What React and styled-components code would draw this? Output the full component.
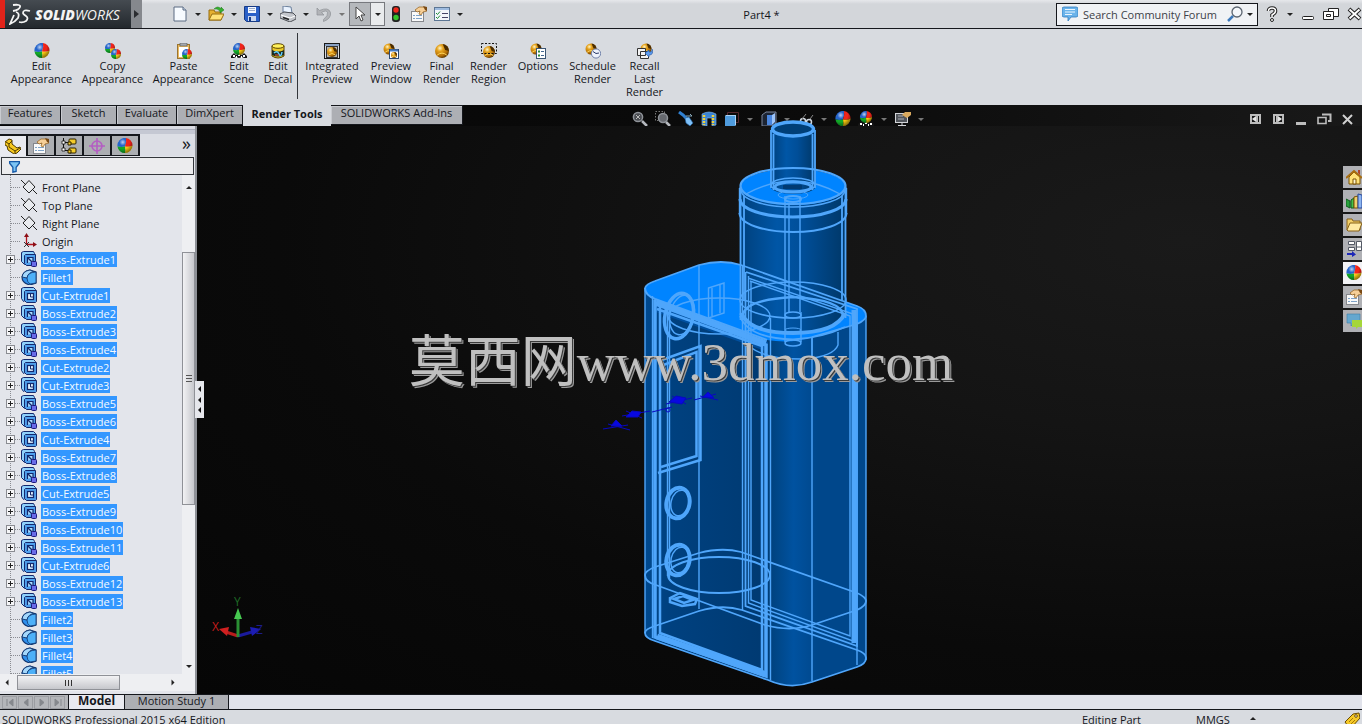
import { useId } from "react";
import styled, { createGlobalStyle, css } from "styled-components";

const GlobalStyle = createGlobalStyle`
  * { box-sizing: border-box; }
  body {
    margin: 0;
    overflow: hidden;
    font-family: "Open Sans", "Noto Sans", sans-serif;
    font-size: 11px;
    color: #15171c;
  }
  button, input { font: inherit; color: inherit; }
  button { border: 0; padding: 0; background: none; }
  svg { display: block; flex: none; }
`;

/* ---------- small icons, all on a 16px grid ---------- */

const Svg = ({ children, size = 16, ...rest }) => (
  <svg width={size} height={size} viewBox="0 0 16 16" fill="none" {...rest}>
    {children}
  </svg>
);

const Ball = ({ cx = 8, cy = 8, r = 8 }) => {
  const id = useId();
  return (
    <g>
      <radialGradient id={id} cx="35%" cy="28%" r="75%">
        <stop offset="0" stopColor="#fff" stopOpacity="0.7" />
        <stop offset="0.3" stopColor="#fff" stopOpacity="0" />
        <stop offset="0.6" stopColor="#000" stopOpacity="0" />
        <stop offset="1" stopColor="#000" stopOpacity="0.45" />
      </radialGradient>
      <g transform={`translate(${cx} ${cy}) scale(${r / 8})`}>
        <path d="M1-8A8 8 0 0 0-8 1Q-4 2 0 1Q2-4 1-8Z" fill="#2565cc" />
        <path d="M1-8Q2-4 0 1Q5 2 8 0A8 8 0 0 0 1-8Z" fill="#f0241a" />
        <path d="M-8 1Q-4 2 0 1Q1 5 0 8A8 8 0 0 1-8 1Z" fill="#12a828" />
        <path d="M0 1Q5 2 8 0A8 8 0 0 1 0 8Q1 5 0 1Z" fill="#f8c810" />
      </g>
      <circle cx={cx} cy={cy} r={r} fill={`url(#${id})`} />
    </g>
  );
};

const Gold = ({ cx = 8, cy = 8, r = 7 }) => {
  const id = useId();
  return (
    <g>
      <radialGradient id={id} cx="35%" cy="30%" r="75%">
        <stop offset="0" stopColor="#fff6c8" />
        <stop offset="0.3" stopColor="#e5a21c" />
        <stop offset="0.75" stopColor="#b06c06" />
        <stop offset="1" stopColor="#4a2c00" />
      </radialGradient>
      <circle cx={cx} cy={cy} r={r} fill={`url(#${id})`} />
      <path
        d={`M${cx + r * 0.1} ${cy - r}A${r} ${r} 0 0 1 ${cx + r} ${cy}L${cx + r * 0.45} ${cy - r * 0.15}Z`}
        fill="#4a2c00"
      />
      <path d={`M${cx - r * 0.7} ${cy + r * 0.6}Q${cx} ${cy} ${cx + r * 0.7} ${cy + r * 0.6}`} stroke="#ffd75a" />
    </g>
  );
};

const Checks = () => (
  <g>
    <path d="M0 13l3-3 2 2 3-2 3 2 2-2 3 3v2h-3l-2-1-3 1-3-1-2 1H0z" fill="#151515" />
    <path d="M2 13h2M7 12h2M12 13h2M5 14h1M10 14h1" stroke="#fff" strokeWidth="2" />
  </g>
);

const Page = ({ x, y, w, h }) => (
  <g>
    <rect x={x + 0.5} y={y + 0.5} width={w} height={h} fill="#fff" stroke="#3b5573" />
    <path d={`M${x + 2} ${y + 3.5}h2M${x + 2} ${y + 7.5}h2`} stroke="#2a8a3a" strokeWidth="2" />
    <path d={`M${x + 5} ${y + 3.5}h3M${x + 5} ${y + 7.5}h3`} stroke="#44688f" />
  </g>
);

const Hand = ({ dark }) => (
  <g>
    <rect x="0.5" y="5.5" width="12" height="10" fill={dark ? "#4a4a4a" : "#f9f9f9"} stroke={dark ? "#bbb" : "#85878c"} />
    <path d="M2 9.500h2M5 9.500h6M2 12.500h2M5 12.500h6" stroke={dark ? "#ddd" : "#7fa3c8"} />
    <path d="M4 4l4-3h4l4 1v3l-4 1-2 3-2-1 1-3-3 1z" fill="#f6cf98" stroke="#9a6a28" strokeWidth="0.8" />
    <path d="M12 0l4 1v4l-2-1z" fill="#7a4a14" />
  </g>
);

const icons = {
  ball: <Ball cy={7.5} r={7.5} />,
  copy: (
    <>
      <Ball cx={5} cy={5} r={5} />
      <Ball cx={11} cy={11} r={5} />
    </>
  ),
  paste: (
    <>
      <rect x="1.5" y="1.5" width="12" height="14" fill="#e9b95e" stroke="#9a7432" />
      <rect x="3" y="4" width="9" height="10" fill="#fff" />
      <rect x="4" y="0" width="7" height="3" fill="#a4a8ae" stroke="#555" strokeWidth=".6" />
      <Ball cx={11} cy={11} r={5} />
    </>
  ),
  scene: (
    <>
      <Checks />
      <Ball cx={8} cy={6} r={6} />
    </>
  ),
  decal: (
    <>
      <path d="M2 3v10q6 4 12 0V3z" fill="#ebc92a" stroke="#5a4300" />
      <ellipse cx="8" cy="3" rx="6" ry="2.3" fill="#fff05a" stroke="#5a4300" />
      <path d="M2 7q6 3 12 0v5q-6 3-12 0z" fill="#1c2b22" />
      <path d="M4 10q3-3 5 1t3-2" stroke="#5fd0ff" strokeWidth="1.5" />
      <path d="M5 12h4" stroke="#f25a3a" />
    </>
  ),
  integrated: (
    <>
      <rect x="0.5" y="0.5" width="15" height="15" fill="#d8dade" stroke="#1a1a1a" />
      <path d="M1 2h14" stroke="#8aa2c4" strokeWidth="2" />
      <rect x="2.5" y="3.5" width="11" height="11" fill="#b5b5b5" stroke="#333" />
      <Gold cy={9} r={5} />
    </>
  ),
  preview: (
    <>
      <Gold cx={6} cy={6} r={5.5} />
      <rect x="6.5" y="6.5" width="9" height="9" fill="#fff" stroke="#2d4b73" />
      <path d="M7 7.500h8" stroke="#4a7cc0" strokeWidth="2" />
      <Gold cx={11} cy={12} r={3} />
    </>
  ),
  gold: <Gold />,
  region: (
    <>
      <Gold cy={9} r={6} />
      <rect x="0.5" y="0.5" width="15" height="10" stroke="#111" strokeDasharray="2 1.5" />
    </>
  ),
  options: (
    <>
      <Gold cx={6} cy={6} r={5.5} />
      <Page x={6} y={5} w={9} h={10} />
    </>
  ),
  schedule: (
    <>
      <Gold cx={6} cy={6} r={5.5} />
      <circle cx="11" cy="10.5" r="4.6" fill="#eef2fb" stroke="#6e7fa8" />
      <path d="M8 8.500l3 2 3-.5" stroke="#2c3b6a" />
    </>
  ),
  recall: (
    <>
      <Gold cx={9} cy={6} r={5.5} />
      <path d="M.5 5.500h8v7h-8zM3.500 8.500h8v7h-8z" fill="#f3f3f3" stroke="#333" />
      <path d="M8 10l4-3v2q4 0 3-3 2 6-3 6v2z" fill="#5c9cf0" stroke="#1d4f9c" strokeWidth=".6" />
    </>
  ),
  newDoc: (
    <>
      <path d="M2 1h9l3 3v11H2z" fill="#f7fbff" stroke="#5a6b82" />
      <path d="M11 1v3h3" fill="#cfdcec" stroke="#5a6b82" />
    </>
  ),
  open: (
    <>
      <path d="M1 14V4h5l1 2h6v8z" fill="#e5b030" stroke="#966c10" />
      <path d="M1 14l3-6h12l-3 6z" fill="#ffe278" stroke="#966c10" />
      <path d="M6 3q4-4 7 0V1l3 3-4 3V5q-3-3-6-2z" fill="#36b12e" stroke="#1b7418" strokeWidth=".5" />
    </>
  ),
  save: (
    <>
      <path d="M.5.500h15v15H2.500L.500 13.500z" fill="#2a60c8" stroke="#173b86" />
      <path d="M4 1h8v6H4z" fill="#f4f8ff" />
      <path d="M5 2.500h6M5 4.500h6" stroke="#9aaac8" />
      <path d="M4 10h8v5H4z" fill="#c9d6ee" />
      <path d="M5 11h2v4H5z" fill="#173b86" />
    </>
  ),
  print: (
    <>
      <path d="M3 6V0l8 1 1 6z" fill="#eaf3ff" stroke="#6a7f9c" />
      <path d="M0 8l4-2 9 1 3 3v3l-6 3-10-4z" fill="#c3c6cc" stroke="#4c4f55" />
      <path d="M1 9l9 3 5-2" stroke="#fff" />
      <path d="M3 11.500l6 2" stroke="#222" strokeWidth="1.500" />
    </>
  ),
  undo: <path d="M1 2v7h7L5.500 6.500q5-3 6 0 1 3-4 7v2q8-3 7-9-2-6-11-2z" fill="#b2b4b8" stroke="#8d9095" strokeWidth=".7" />,
  pointer: <path d="M4 1v12l3-3 2 5 2-1-2-5h4z" fill="#fff" stroke="#444" />,
  traffic: (
    <>
      <rect x="4" y="0" width="8" height="16" rx="3" fill="#222" />
      <circle cx="8" cy="4" r="2.700" fill="#f0291c" />
      <circle cx="8" cy="11.500" r="2.700" fill="#33c52c" />
    </>
  ),
  props: <Hand />,
  hudProps: <Hand dark />,
  list: (
    <>
      <rect x=".5" y="1.500" width="15" height="13" fill="#f2f6fb" stroke="#5c7694" />
      <path d="M1 3h14" stroke="#9dbbe0" strokeWidth="2" />
      <path d="M2 7l1.500 1.500L6 5.500M2 11l1.500 1.500L6 9.500" stroke="#1f8d35" />
      <path d="M8 7.500h6M8 11.500h6" stroke="#446" />
    </>
  ),
  bubble: (
    <>
      <path d="M2 1h12q2 0 2 2v6q0 2-2 2H9l-3 4v-4H2q-2 0-2-2V3q0-2 2-2z" fill="#6bb3ea" stroke="#2f7cc0" strokeWidth=".8" />
      <path d="M3 3.500h10M3 6h10M3 8.500h7" stroke="#eaf6ff" />
    </>
  ),
  search: (
    <>
      <path d="M6 10l-5 5" stroke="#3d79bb" strokeWidth="2.500" />
      <circle cx="10" cy="6" r="5" fill="#f4f7fb" stroke="#5b6470" strokeWidth="1.300" />
    </>
  ),
  zoomFit: (
    <>
      <path d="M10 10l5 5" stroke="#b6b9bf" strokeWidth="2.500" />
      <circle cx="6" cy="6" r="4.600" fill="#4a4d52" stroke="#8f9399" strokeWidth="1.500" />
      <path d="M4 4l4 4M8 4L4 8" stroke="#bbb" />
    </>
  ),
  zoomArea: (
    <>
      <rect x=".5" y=".5" width="9" height="9" stroke="#777" strokeDasharray="1.500 1.500" />
      <path d="M11 11l4 4" stroke="#b6b9bf" strokeWidth="2.500" />
      <circle cx="8" cy="7" r="4.500" fill="#66696f" stroke="#8f9399" strokeWidth="1.500" />
    </>
  ),
  prevView: (
    <>
      <path d="M1 1l4 3 6 6" stroke="#2f7fd0" strokeWidth="3" />
      <path d="M7 7l4-1 4 6-3 3-4-3z" fill="#7ec0f8" stroke="#1d5c9c" strokeWidth=".6" />
      <path d="M8 5h6l-2-2" stroke="#8ab" />
    </>
  ),
  section: (
    <>
      <path d="M1 3q7-4 14 0v11l-4 1V7H6v8l-5-1z" fill="#3b83d2" stroke="#88bdf0" strokeWidth=".6" />
      <path d="M3 4v10M12 4v10" stroke="#f1d23c" strokeWidth="2.500" strokeDasharray="2 1" />
    </>
  ),
  orient: (
    <>
      <path d="M3.500 5V1.500h11v10H11" stroke="#54272e" />
      <rect x="1" y="5" width="10" height="10" fill="#4f9bdd" />
      <path d="M1 5l1-1h10l-1 1zM11 5l1-1v10l-1 1z" fill="#a9d4f7" />
    </>
  ),
  display: (
    <>
      <path d="M1 4l4-3h10v11l-4 3H1z" fill="#1c2433" stroke="#7c879e" />
      <path d="M6 4h5v10H6z" fill="#4a86de" />
      <path d="M11 4l3-2v9l-3 3z" fill="#9cc4fa" />
    </>
  ),
  glasses: (
    <>
      <circle cx="5" cy="10" r="2.500" stroke="#cfd6de" strokeWidth="1.500" />
      <circle cx="11" cy="11" r="2.500" stroke="#cfd6de" strokeWidth="1.500" />
      <path d="M4 8l4-5M12 8l3-4" stroke="#888" />
    </>
  ),
  monitor: (
    <>
      <rect x=".5" y="2.500" width="12" height="9" fill="#50545a" stroke="#d2d4d8" />
      <path d="M3 14.500h8M7 12v3" stroke="#d2d4d8" />
      <path d="M3 5h5M3 8h6" stroke="#a8acb4" />
      <path d="M7 4l3-3h6v3l-4 3z" fill="#d9a95e" />
    </>
  ),
  part: (
    <>
      <path d="M0 4l4-3 3 1v4l5 4 3-1 1 2-4 4-3 1-6-4-1-4-2-1z" fill="#f6c81e" stroke="#4f3a00" />
      <path d="M1 4l3 2 3-3M4 6v3l6 4 5-3M10 13v2" stroke="#4f3a00" />
    </>
  ),
  config: (
    <>
      <path d="M2.500 0v12.500H8M2.500 4.500H8" stroke="#111" />
      <rect x="8" y="1" width="7" height="5" rx="1" fill="#f4cc2c" stroke="#2a2000" />
      <rect x="8" y="10" width="7" height="5" rx="1" fill="#f4cc2c" stroke="#2a2000" />
      <path d="M7 4h3v3H7zM7 12h3v3H7z" fill="#f4cc2c" stroke="#2a2000" />
      <path d="M1 3h3v3H1zM1 10h3v3H1z" fill="#fff" stroke="#111" strokeWidth=".8" />
    </>
  ),
  target: (
    <>
      <circle cx="8" cy="8" r="5" stroke="#b45ec2" strokeWidth="1.600" />
      <path d="M8 0v16M0 8h16" stroke="#b45ec2" strokeWidth="1.600" />
    </>
  ),
  filter: <path d="M2 2h12v2L10 9v5l-4 1V9L2 4z" fill="#7cc4f4" stroke="#1559a8" strokeWidth="1.600" />,
  plane: (
    <>
      <path d="M8 1.500L14 8l-6 6L2 8z" fill="#e9ebef" stroke="#222" />
      <path d="M0 1l5 5M11 10l5 5" stroke="#222" />
    </>
  ),
  origin: (
    <>
      <path d="M5.500 12V2M6 11.500h8" stroke="#b0121b" strokeWidth="1.300" />
      <path d="M3 4l2.500-4L8 4zM12 9l4 2.500-4 2.500z" fill="#8c0f16" />
      <path d="M3 9l5 5M8 9l-5 5" stroke="#222" strokeWidth=".9" />
    </>
  ),
  boss: (
    <>
      <path d="M.5 1.500l2-1h10l1 2v10h-7l-3 1-3-3z" fill="#8ed0fb" stroke="#14286c" />
      <path d="M3.500 4.500l1-1h10v10l-1 1h-8l-2-2z" fill="#4fa0ee" stroke="#14286c" />
      <path d="M6.500 12V6.500H12V10" fill="#a9dcff" stroke="#14286c" strokeWidth="1.200" />
      <path d="M7 7l4 4" stroke="#14286c" strokeWidth="1.200" />
      <rect x="10.500" y="10.500" width="5" height="5" rx="1" fill="#6a6ce8" stroke="#1d1a7c" />
    </>
  ),
  cut: (
    <>
      <path d="M.5 1.500l2-1h10l2 2v10h-9l-3 2-2-3z" fill="#8ed0fb" stroke="#14286c" />
      <path d="M3.500 4.500l1-1h11v11l-1 1h-9l-2-2z" fill="#4f9eea" stroke="#14286c" />
      <rect x="6.500" y="6.500" width="6" height="6" fill="#dff1ff" stroke="#14286c" strokeWidth="1.200" />
      <path d="M9.500 7v3H12" stroke="#14286c" />
    </>
  ),
  fillet: (
    <>
      <path d="M1 8q1-6 8-7l6 2v11l-6 2q-8-2-8-8z" fill="#2f8fec" stroke="#12366f" strokeWidth="1.200" />
      <path d="M1 8q1-6 8-7l4 2q-6 0-7 6z" fill="#a4d8fc" stroke="#12366f" strokeWidth=".9" />
      <path d="M6 9q1-6 9-6v11l-6 1q-3-2-3-6z" fill="#4db0f8" stroke="#12366f" strokeWidth=".8" />
    </>
  ),
  home: (
    <>
      <path d="M3 8v7h11V8L8 3z" fill="#ffe27a" stroke="#7a5200" />
      <path d="M0 9l8-7 8 7" stroke="#a86d10" strokeWidth="2" />
      <path d="M7 10h3v5H7z" fill="#fff6cf" stroke="#7a5200" />
      <path d="M12 1h2v5l-2-2z" fill="#b0452a" />
    </>
  ),
  library: (
    <>
      <path d="M0 6l4 2v7l-4-2z" fill="#27a03a" stroke="#0f5a1c" />
      <path d="M5 7l3-2v10H5z" fill="#46c04a" stroke="#0f5a1c" />
      <path d="M8 4l4-1v12H8z" fill="#f0d070" stroke="#7a5200" />
      <path d="M12 1l4 1v13h-4z" fill="#8db5f0" stroke="#27479a" />
    </>
  ),
  folder: (
    <>
      <path d="M1 13V2h5l1 2h7v9z" fill="#f2cf68" stroke="#876017" />
      <path d="M1 13l3-7h12l-3 8H2z" fill="#ffeaa2" stroke="#876017" />
    </>
  ),
  palette: (
    <>
      <path d="M2.500.500h6v3h-6zM2.500 6.500h6v3h-6zM10.500.500h5v9h-5zM10 6h6" fill="#fff" stroke="#555a66" />
      <path d="M1 12h5v-2l4 3.500L6 16v-2H1z" fill="#1d27b8" />
    </>
  ),
  forum: (
    <>
      <path d="M1 1h13v9H8l-3 3v-3H1z" fill="#64a7cf" stroke="#3c7ca6" strokeWidth=".6" />
      <path d="M6 7h10v7h-4l-2 2v-2H6z" fill="#a5d63a" />
    </>
  ),
  tag: (
    <>
      <path d="M1 10l8-8 6-1 1 5-8 9q-2 1-4-1z" fill="#f5c928" stroke="#6a4b00" />
      <circle cx="12" cy="4" r="1.300" fill="#fff" stroke="#6a4b00" />
      <path d="M5 10l4-4M7 12l4-4" stroke="#a77a05" />
    </>
  ),
  help: (
    <>
      <path d="M4.500 5q0-3 3.500-3t3.500 3Q11.500 7 8 9v2" stroke="#222" strokeWidth="3.600" />
      <path d="M4.500 5q0-3 3.500-3t3.500 3Q11.500 7 8 9v2" stroke="#fff" strokeWidth="1.500" />
      <circle cx="8" cy="14" r="1.500" fill="#fff" stroke="#222" />
    </>
  ),
  winMin: <rect x="2.500" y="10.500" width="11" height="3" rx="1" fill="#fff" stroke="#222" />,
  winMax: (
    <>
      <path d="M5.500 2.500h10v8h-10z" fill="#fff" stroke="#222" />
      <path d="M.500 5.500h10v8H.500z" fill="#fff" stroke="#222" />
      <path d="M3.500 8.500h4v2h-4z" stroke="#222" />
    </>
  ),
  winClose: (
    <>
      <path d="M3 3l11 10M14 3L3 13" stroke="#222" strokeWidth="4" />
      <path d="M3.500 3.500l10 9M13.500 3.500l-10 9" stroke="#fff" strokeWidth="2" />
    </>
  ),
  dockLeft: (
    <>
      <path d="M3 3h11v10H3z" fill="#bdbdbd" />
      <path d="M5 5h4v6H5zM11 5h1v6h-1z" fill="#171717" />
      <path d="M9 5v6L5 8z" fill="#e6e6e6" />
    </>
  ),
  dockRight: (
    <>
      <path d="M3 3h11v10H3z" fill="#bdbdbd" />
      <path d="M8 5h4v6H8zM5 5h1v6H5z" fill="#171717" />
      <path d="M8 5v6l4-3z" fill="#e6e6e6" />
    </>
  ),
  docMin: <path d="M3 11h10v3H3z" fill="#bdbdbd" />,
  docMax: (
    <>
      <path d="M6 3.500h8.500V10H12" stroke="#bdbdbd" strokeWidth="2" />
      <path d="M2 6.500h8v6H2z" stroke="#bdbdbd" strokeWidth="1.600" />
    </>
  ),
  docClose: <path d="M4 4l9 9M13 4l-9 9" stroke="#d0d0d0" strokeWidth="2" />,
};

const Icon = ({ name, size }) => <Svg size={size}>{icons[name]}</Svg>;

/* ---------- frame ---------- */

const Window = styled.div`
  position: relative;
  display: flex;
  flex-direction: column;
  height: 100vh;
  overflow: hidden;
  background: #d8dbe0;
`;

const TitleBar = styled.header`
  display: flex;
  align-items: center;
  height: 29px;
  background: linear-gradient(#e6e8eb, #d3d6da 4px, #d3d6da);
  border-bottom: 1px solid #15171c;
`;

const Logo = styled.div`
  display: flex;
  align-items: center;
  gap: 4px;
  align-self: stretch;
  width: 131px;
  padding-left: 4px;
  border-left: 5px solid #e2231a;
  background: linear-gradient(#454b51, #23282d);
  color: #f4f4f4;
  font-size: 14px;
  font-style: italic;
  b { font-weight: 800; }
`;

const LogoArrow = styled.button`
  display: flex;
  align-items: center;
  align-self: stretch;
  justify-content: center;
  width: 11px;
  margin-right: 27px;
  background: #85888d;
`;

const caret = css`
  content: "";
  border: 3px solid transparent;
  border-bottom-width: 0;
  border-top-color: ${(p) => (p.$dim ? "#777" : "#222")};
`;

const ToolButton = styled.button`
  display: flex;
  align-items: center;
  justify-content: center;
  flex: none;
  width: ${(p) => p.$w || 22}px;
  height: 24px;
`;

const Drop = styled.button`
  display: flex;
  align-items: center;
  justify-content: center;
  flex: none;
  width: 14px;
  height: 24px;
  &::after { ${caret} }
`;

const SelectGroup = styled.div`
  display: flex;
  border: 1px solid #77797e;
  background: #e9ebed;
  ${ToolButton} { width: 21px; height: 22px; background: #b5b8bc; border-right: 1px solid #77797e; }
  ${Drop} { width: 13px; height: 22px; }
`;

const DocTitle = styled.h1`
  flex: 1;
  margin: 0;
  text-align: center;
  font-size: 11px;
  font-weight: 400;
`;

const SearchBox = styled.label`
  display: flex;
  align-items: center;
  width: 202px;
  height: 23px;
  padding-left: 5px;
  border: 1px solid #15171c;
  background: #f0f2f5;
  input {
    flex: 1;
    min-width: 0;
    padding: 0 0 0 5px;
    border: 0;
    background: none;
    outline: 0;
  }
  input::placeholder { color: #3d4148; opacity: 1; }
`;

const WindowButtons = styled.div`
  display: flex;
  margin: 0 -3px 0 3px;
`;

const Ribbon = styled.nav`
  display: flex;
  align-items: flex-start;
  gap: 10px;
  height: 76px;
  padding: 14px 11px 0;
  background: #d8dbe0;
`;

const RibbonButton = styled.button`
  display: flex;
  flex-direction: column;
  align-items: center;
  flex: none;
  width: ${(p) => p.$w}px;
  line-height: 13px;
  white-space: nowrap;
`;

const RibbonRule = styled.span`
  width: 1px;
  height: 66px;
  margin: -10px -3px 0 -5px;
  background: #33363b;
`;

const TabRow = styled.div`
  display: flex;
  align-items: flex-start;
  height: 21px;
  background: linear-gradient(90deg, #060606, #0b0b0b 60%, #191919);
`;

const CommandTab = styled.button`
  flex: none;
  width: ${(p) => p.$w}px;
  height: 20px;
  padding-bottom: 4px;
  border: solid #15171c;
  border-width: 1px 1px 1px 0;
  background: #adafb4;
  box-shadow: inset 1px 1px #c9cbd0;
  white-space: nowrap;
  line-height: 14px;
  ${(p) =>
    p.$active &&
    css`
      height: 21px;
      border: 0;
      background: #d8dbe0;
      box-shadow: none;
      font-weight: 700;
    `}
`;

const HeadsUp = styled.div`
  display: flex;
  margin: 2px auto 0 165px;
  height: 19px;
`;

const DocButtons = styled.div`
  display: flex;
  margin-top: 2px;
  padding-right: 4px;
`;

const Workspace = styled.div`
  display: flex;
  flex: 1;
  min-height: 0;
`;

const Panel = styled.aside`
  display: flex;
  flex-direction: column;
  flex: none;
  width: 197px;
  padding-top: 8px;
  border-right: 2px solid #8d9096;
  background: linear-gradient(#d9dbe2 3px, #8f93a3 3px, #c5c8d3 4px, #c5c8d3 8px, #e3e5eb 8px);
`;

const PanelTabs = styled.div`
  display: flex;
  height: 22px;
  background: #dcdee5;
`;

const PanelTab = styled.button`
  display: flex;
  align-items: center;
  justify-content: center;
  width: 28px;
  border: solid #15171c;
  border-width: 2px 2px 1px 0;
  background: ${(p) => (p.$active ? "#e9eaf0" : "#acaeb2")};
  ${(p) => p.$active && "border-bottom: 0;"}
`;

const More = styled.button`
  margin-left: auto;
  padding: 0 4px 4px 0;
  font-size: 18px;
  line-height: 18px;
`;

const FilterBox = styled.label`
  display: flex;
  align-items: center;
  height: 18px;
  margin: 1px 1px 0;
  padding-left: 6px;
  border: 1px solid #33363b;
  background: #ececee;
  input {
    width: 100%;
    height: 14px;
    border: 0;
    background: none;
    outline: 0;
  }
`;

const TreeArea = styled.div`
  display: flex;
  flex: 1;
  min-height: 0;
`;

const Tree = styled.ul`
  position: relative;
  flex: 1;
  margin: 0;
  padding: 3px 0 0;
  overflow: hidden;
  list-style: none;
  background:
    repeating-linear-gradient(#8a8c92 0 1px, transparent 1px 2px) 10px 0 / 1px 100% no-repeat,
    #e3e5eb;
`;

const TreeRow = styled.li`
  display: flex;
  align-items: center;
  height: 18px;
  padding-left: 6px;
`;

const Expander = styled.button`
  width: 9px;
  height: 9px;
  border: 1px solid #8a8c92;
  background:
    linear-gradient(#222, #222) center / 5px 1px no-repeat,
    linear-gradient(#222, #222) center / 1px 5px no-repeat,
    #f5f5f7;
  ${(p) => p.$empty && "visibility: hidden;"}
`;

const Twig = styled.span`
  width: ${(p) => (p.$long ? 9 : 5)}px;
  margin-left: ${(p) => (p.$long ? -4 : 0)}px;
  margin-right: 1px;
  border-top: 1px dotted #8a8c92;
`;

const TreeLabel = styled.span`
  height: 15px;
  margin-left: 4px;
  padding: 0 1px;
  line-height: 15px;
  ${(p) => p.$selected && "background: #3397ff; color: #f4faff;"}
`;

const ScrollV = styled.div`
  display: flex;
  flex-direction: column;
  width: 13px;
  padding-top: 4px;
  background: #eeeff2;
`;

const ScrollArrow = styled.button`
  display: flex;
  align-items: center;
  justify-content: center;
  width: 13px;
  height: 16px;
  &::after {
    ${caret}
    transform: rotate(${(p) => p.$turn || 0}deg);
  }
`;

const ThumbV = styled.div`
  display: flex;
  align-items: center;
  justify-content: center;
  height: 253px;
  margin-top: 57px;
  margin-bottom: auto;
  border: 1px solid #8f9197;
  background: linear-gradient(90deg, #f2f2f4, #c6c7cc);
  &::after {
    content: "";
    width: 6px;
    height: 7px;
    background: repeating-linear-gradient(#555 0 1px, transparent 1px 3px);
  }
`;

const ScrollH = styled.div`
  display: flex;
  align-items: center;
  height: 17px;
  margin-bottom: 3px;
  padding-right: 16px;
  background: #eeeff2;
`;

const ThumbH = styled.div`
  display: flex;
  align-items: center;
  justify-content: center;
  width: 103px;
  height: 15px;
  margin: 0 auto 0 4px;
  border: 1px solid #8f9197;
  background: linear-gradient(#f2f2f4, #c6c7cc);
  &::after {
    content: "";
    width: 7px;
    height: 6px;
    background: repeating-linear-gradient(90deg, #333 0 1px, transparent 1px 3px);
  }
`;

const Viewport = styled.main`
  position: relative;
  display: flex;
  flex: 1;
  align-items: flex-start;
  justify-content: flex-end;
  min-width: 0;
  background: radial-gradient(ellipse at 85% 20%, #1a1a1a, #141414 30%, #0a0a0a 65%, #060606);
`;

const Splitter = styled.button`
  position: absolute;
  left: -2px;
  top: 255px;
  display: flex;
  flex-direction: column;
  justify-content: space-evenly;
  align-items: center;
  width: 9px;
  height: 37px;
  background: #e6e7ec;
  span {
    border: 3px solid transparent;
    border-left: 0;
    border-right-color: #111;
  }
`;

/* the model reaches up behind the tab row, so the drawing starts 21px higher */
const Scene = styled.svg`
  position: absolute;
  left: 0;
  top: -21px;
  width: 100%;
  height: calc(100% + 21px);
  pointer-events: none;
`;

const TaskPane = styled.div`
  display: flex;
  flex-direction: column;
  gap: 2px;
  width: 19px;
  margin-top: 40px;
`;

const TaskButton = styled.button`
  height: 22px;
  padding-left: 3px;
  overflow: hidden;
  background: ${(p) => (p.$active ? "#f2f2f5" : "#b0b1b5")};
`;

const StudyBar = styled.div`
  display: flex;
  height: 16px;
  border-top: 1px solid #15171c;
  border-bottom: 1px solid #15171c;
  background: #e1e3eb;
`;

const PageButtons = styled.div`
  display: flex;
  align-items: center;
  width: 68px;
  padding-left: 2px;
  gap: 1px;
  background: #b4b6ba;
`;

const PageButton = styled.button`
  width: 15px;
  height: 13px;
  border: 1px solid #9b9da2;
`;

const StudyTab = styled.button`
  width: ${(p) => p.$w}px;
  padding-bottom: 2px;
  border: solid #15171c;
  border-width: 0 1px 0 ${(p) => (p.$active ? 1 : 0)}px;
  background: ${(p) => (p.$active ? "#e9eaf0" : "#adafb4")};
  font-weight: ${(p) => (p.$active ? 700 : 400)};
  font-size: ${(p) => (p.$active ? 12 : 11)}px;
  line-height: 12px;
`;

const StatusBar = styled.footer`
  display: flex;
  height: 14px;
  padding: 2px 2px 0;
  overflow: hidden;
  background: #d8dbe0;
  line-height: 15px;
  white-space: nowrap;
`;

const StatusItem = styled.span`
  display: flex;
  width: ${(p) => p.$w}px;
  ${(p) => p.$first && "margin-right: auto;"}
`;

const UpMark = styled.span`
  align-self: center;
  margin-left: 4px;
  border: 3px solid transparent;
  border-top-width: 0;
  border-bottom-color: #222;
`;

const Watermark = styled.div`
  position: absolute;
  inset: 0;
  display: flex;
  align-items: center;
  justify-content: center;
  pointer-events: none;
  font-family: "Liberation Serif", "Noto Sans CJK SC", serif;
  font-size: 53px;
  line-height: 60px;
  color: #c0c0c0;
  text-shadow: 1px 1px #3a3a3a, 2px 2px #9a9a9a;
  span { font-size: 56px; }
`;

/* ---------- the part in the graphics area ---------- */

const Ring = ({ x, y, rx, ry, w = 1.5, tilt = 0 }) => (
  <ellipse cx={x} cy={y} rx={rx} ry={ry} strokeWidth={w} transform={tilt ? `rotate(${tilt} ${x} ${y})` : undefined} />
);

const Model = () => (
  <Scene viewBox="197 105 1165 589" preserveAspectRatio="xMidYMid meet">
    <defs>
      <linearGradient id="side" gradientUnits="userSpaceOnUse" x1="644" x2="867" y1="0" y2="0">
        <stop offset="0" stopColor="#00498f" />
        <stop offset="0.1" stopColor="#004180" />
        <stop offset="0.54" stopColor="#003a72" />
        <stop offset="0.58" stopColor="#004482" />
        <stop offset="0.67" stopColor="#0052a0" />
        <stop offset="0.78" stopColor="#00478b" />
        <stop offset="1" stopColor="#00478b" />
      </linearGradient>
      <linearGradient id="tank" x1="0" x2="1">
        <stop offset="0" stopColor="#00407c" />
        <stop offset="0.35" stopColor="#0056a6" />
        <stop offset="0.6" stopColor="#004e98" />
        <stop offset="1" stopColor="#003767" />
      </linearGradient>
    </defs>
    <path d="M645 290V633Q645 638 655 641L768 680Q790 690 812 682L857 667Q866 664 866 658V315Z" fill="url(#side)" />
    <path
      d="M645 288Q646 284 655 281L699 265Q722 259 741 265L857 306Q866 309 866 316Q866 320 857 324L812 337Q792 344 767 340L655 299Q645 295 645 288Z"
      fill="#0084ff"
    />
    <path d="M656 300L745 333L768 342V352L656 312Z" fill="#0050a0" />
    <path d="M740 187V312A53 20 0 0 0 846 312V187Z" fill="url(#tank)" />
    <ellipse cx="793" cy="187" rx="53" ry="18" fill="#0084ff" />
    <path d="M771 129V187A22 7 0 0 0 815 187V129Z" fill="url(#tank)" />
    <ellipse cx="793" cy="129" rx="22" ry="8" fill="#003f78" />

    <g fill="none" stroke="#4fa6fb" strokeWidth="1.4">
      {/* mouthpiece */}
      <Ring x={793} y={129} rx={20.5} ry={7} w={3.5} />
      <path d="M771 130V188M773.500 134V190M812.500 134V190M815 130V188" strokeWidth="1.800" />
      <Ring x={793} y={185} rx={22} ry={7} />
      <Ring x={793} y={187} rx={18} ry={5} w={3} />
      <path d="M783 187h19" stroke="#003a72" strokeWidth="4" />
      {/* tank */}
      <Ring x={793} y={186} rx={52.5} ry={18} w={2.200} />
      <path d="M746 194Q793 168 840 194M741 190A52 17 0 0 0 845 190" />
      <path d="M740 199A53 18 0 0 0 846 199" strokeWidth="3" />
      <path d="M739.500 213A53.500 19 0 0 0 846.500 213" strokeWidth="2" />
      <path d="M739.500 188V214M846.500 188V214" />
      <path d="M740.500 187V320M744 196V300M842 196V300M845.500 187V318" strokeWidth="1.800" />
      <path d="M785 196V312M789 203V312M800 196V312M785 312V342M801 312V342" />
      <Ring x={793} y={199} rx={8} ry={3} w={2} />
      <Ring x={793} y={195} rx={15} ry={4} w={1} />
      <Ring x={793} y={315} rx={8} ry={3} />
      <Ring x={793} y={330} rx={8} ry={2} w={1} />
      <Ring x={793} y={343} rx={8} ry={3} />
      <Ring x={793} y={300} rx={53} ry={18} />
      <path d="M743 316Q743 300 793 297Q843 300 843 316" strokeWidth="2.500" />
      <path d="M741 313Q750 333 793 333Q836 333 845 313" strokeWidth="4" />
      <path d="M740 316Q748 338 793 339.500Q822 338 845 327" strokeWidth="1.800" />
      <path d="M748 345Q764 360 806 359Q834 356 838 345V332M812 338V360" />
      {/* body */}
      <path d="M645 288Q646 284 655 281L699 265Q722 259 741 265L857 306Q866 309 866 316Q866 320 857 324L812 337" strokeWidth="1.800" />
      <path d="M645 288Q645 295 655 299L767 340" strokeWidth="2" />
      <path d="M645 288V633M866 316V660M652.500 296V638M699 265V609M742.500 266V610M812 337V681M857 322V665" />
      <path d="M645 633Q645 638 655 641L768 680Q790 690 812 682L857 667Q866 664 866 658Q866 653 857 650L742 610Q722 604 699 611L655 626Q645 629 645 633Z" strokeWidth="1.800" />
      <path d="M645 575Q645 582 656 585L765 625Q790 632 812 625L857 610Q866 606 866 601Q866 597 857 593L741 552Q722 547 699 553L655 567Q645 571 645 575Z" strokeWidth="1.800" />
      <Ring x={719} y={316} rx={51} ry={18} />
      <Ring x={719} y={575} rx={51} ry={18} w={2} />
      <path d="M667.500 310V576M669.500 318V578M770.500 318V680" />
      {/* front frame */}
      <path d="M655 300V637L766 676V345L656 304" strokeWidth="3.500" />
      <path d="M660 306V633L762 670V346L657 309" strokeWidth="2.500" />
      <path d="M657 636.500L765 674" strokeWidth="6" />
      <path d="M656 302L766 343" strokeWidth="5" />
      {/* rear frame */}
      <path d="M745.500 272V606L857 646V309L746 272" strokeWidth="1.800" />
      <path d="M748.500 276V603L853 641V314L748 278M751 281V600L850 636V316L750 281" />
      <path d="M854 310V643" strokeWidth="5" />
      {/* screen */}
      <path d="M659 361L700.500 346V460L658 473" strokeWidth="2.500" />
      <path d="M661 366L696.500 352V456L661 467" strokeWidth="2.500" />
      <path d="M708.500 288L724 283V313L708.500 318ZM712 288V316M720 285V313" />
      {/* buttons */}
      <Ring x={679} y={316} rx={14} ry={23} w={3.500} tilt={12} />
      <Ring x={682} y={315} rx={12} ry={20} tilt={12} />
      <Ring x={678} y={503} rx={11.500} ry={15.500} w={4} tilt={12} />
      <Ring x={680} y={503} rx={9} ry={13} tilt={12} />
      <Ring x={678} y={560} rx={11.500} ry={15.500} w={4} tilt={12} />
      <Ring x={680} y={560} rx={9} ry={13} tilt={12} />
      {/* usb port */}
      <path d="M670 598L680 593L697 599L695 604L682 606L670 602ZM674 599L683 596L693 600L684 603Z" strokeWidth="2.500" />
    </g>

    {/* move arrows */}
    <g stroke="#0808c0" fill="#0808e0">
      <path d="M603 429L628 425M608 424L630 430M622 416L650 411M652 412L672 407M666 404L692 398M694 400L716 394M700 396L718 400M672 396L686 404M626 411L642 418" />
      <path d="M611 426L616 420L622 426ZM626 417L632 411L641 412L638 417ZM669 402L676 396L686 398L682 404ZM703 397L708 392L714 398Z" />
      <circle cx="668" cy="410" r="2" fill="none" />
    </g>

    {/* origin triad */}
    <path d="M238 636L226 632" stroke="#b81c1c" strokeWidth="3" />
    <path d="M219 629L229 627L227 636Z" fill="#d02020" />
    <path d="M238 636L252 632" stroke="#1a1a9c" strokeWidth="3" />
    <path d="M261 629L250 627L252 636Z" fill="#1c1cb4" />
    <path d="M238 637V615" stroke="#2a8f34" strokeWidth="3" />
    <path d="M238 608L234 619H242Z" fill="#46c850" />
    <g fontFamily="Open Sans, sans-serif" fontSize="12">
      <text x="212" y="631" fill="#c41c1c">X</text>
      <text x="234" y="606" fill="#1f6b26">Y</text>
      <text x="256" y="634" fill="#1c1c8c">Z</text>
    </g>
  </Scene>
);

/* ---------- data ---------- */

const ribbon = [
  ["ball", ["Edit", "Appearance"], 61],
  ["copy", ["Copy", "Appearance"], 61],
  ["paste", ["Paste", "Appearance"], 61],
  ["scene", ["Edit", "Scene"], 30],
  ["decal", ["Edit", "Decal"], 28],
  null,
  ["integrated", ["Integrated", "Preview"], 54],
  ["preview", ["Preview", "Window"], 44],
  ["gold", ["Final", "Render"], 37],
  ["region", ["Render", "Region"], 37],
  ["options", ["Options"], 42],
  ["schedule", ["Schedule", "Render"], 47],
  ["recall", ["Recall", "Last", "Render"], 37],
];

const commandTabs = [
  ["Features", 61],
  ["Sketch", 56],
  ["Evaluate", 60],
  ["DimXpert", 66],
  ["Render Tools", 88],
  ["SOLIDWORKS Add-Ins", 132],
];

const headsUp = [
  "zoomFit", "zoomArea", "prevView", "section", "orient", "-",
  "display", "-", "glasses", "-", "ball", "scene", "-", "monitor", "-",
];

const tree = [
  "Front Plane", "Top Plane", "Right Plane", "Origin",
  "Boss-Extrude1", "Fillet1", "Cut-Extrude1", "Boss-Extrude2", "Boss-Extrude3",
  "Boss-Extrude4", "Cut-Extrude2", "Cut-Extrude3", "Boss-Extrude5", "Boss-Extrude6",
  "Cut-Extrude4", "Boss-Extrude7", "Boss-Extrude8", "Cut-Extrude5", "Boss-Extrude9",
  "Boss-Extrude10", "Boss-Extrude11", "Cut-Extrude6", "Boss-Extrude12", "Boss-Extrude13",
  "Fillet2", "Fillet3", "Fillet4", "Fillet5",
];

const treeIcon = (label) => {
  if (label.endsWith("Plane")) return "plane";
  if (label === "Origin") return "origin";
  return label.split("-")[0].replace(/\d+$/, "").toLowerCase();
};

const App = () => (
  <Window>
    <GlobalStyle />
    <TitleBar>
      <Logo>
        <svg width="22" height="22" viewBox="0 0 22 22" fill="none" stroke="#f4f4f4" strokeWidth="1.800">
          <path d="M4 2q8-1 7 2-1 3-7 4M7 9q4 1 2 6-3 4-8 6l4-9" />
          <path d="M21 8q-7-2-7 2 0 1 3 3t0 5q-3 2-7 1" />
        </svg>
        <span>
          <b>SOLID</b>WORKS
        </span>
      </Logo>
      <LogoArrow aria-label="Show menus">
        <svg width="5" height="8" viewBox="0 0 5 8">
          <path d="M0 0l5 4-5 4z" fill="#2a2c30" />
        </svg>
      </LogoArrow>
      {["newDoc", "open", "save", "print", "undo"].map((name) => [
        <ToolButton key={name} aria-label={name}>
          <Icon name={name} />
        </ToolButton>,
        <Drop key={name + "Menu"} aria-label={name + " menu"} $dim={name === "undo"} />,
      ])}
      <SelectGroup>
        <ToolButton aria-label="Select">
          <Icon name="pointer" />
        </ToolButton>
        <Drop aria-label="Select menu" />
      </SelectGroup>
      <ToolButton aria-label="Rebuild">
        <Icon name="traffic" />
      </ToolButton>
      <ToolButton $w={23} aria-label="File properties">
        <Icon name="props" />
      </ToolButton>
      <ToolButton $w={23} aria-label="Settings">
        <Icon name="list" />
      </ToolButton>
      <Drop aria-label="Settings menu" />
      <DocTitle>Part4 *</DocTitle>
      <SearchBox>
        <Icon name="bubble" />
        <input aria-label="Search Community Forum" placeholder="Search Community Forum" />
        <Icon name="search" />
        <Drop aria-label="Search menu" />
      </SearchBox>
      <WindowButtons>
        <ToolButton aria-label="Help">
          <Icon name="help" />
        </ToolButton>
        <Drop aria-label="Help menu" />
        <ToolButton aria-label="Minimize">
          <Icon name="winMin" />
        </ToolButton>
        <ToolButton $w={24} aria-label="Restore">
          <Icon name="winMax" />
        </ToolButton>
        <ToolButton aria-label="Close">
          <Icon name="winClose" />
        </ToolButton>
      </WindowButtons>
    </TitleBar>

    <Ribbon>
      {ribbon.map((item, i) =>
        item ? (
          <RibbonButton key={i} $w={item[2]}>
            <Icon name={item[0]} />
            {item[1].map((line) => (
              <span key={line}>{line}</span>
            ))}
          </RibbonButton>
        ) : (
          <RibbonRule key={i} />
        )
      )}
    </Ribbon>

    <TabRow>
      {commandTabs.map(([label, w]) => (
        <CommandTab key={label} $w={w} $active={label === "Render Tools"}>
          {label}
        </CommandTab>
      ))}
      <HeadsUp>
        {headsUp.map((name, i) =>
          name === "-" ? (
            <Drop key={i} $dim aria-label="More" />
          ) : (
            <ToolButton key={i} $w={23} aria-label={name}>
              <Icon name={name} />
            </ToolButton>
          )
        )}
      </HeadsUp>
      <DocButtons>
        {["dockLeft", "dockRight", "docMin", "docMax", "docClose"].map((name) => (
          <ToolButton key={name} $w={23} aria-label={name}>
            <Icon name={name} />
          </ToolButton>
        ))}
      </DocButtons>
    </TabRow>

    <Workspace>
      <Panel>
        <PanelTabs>
          {["part", "props", "config", "target", "ball"].map((name, i) => (
            <PanelTab key={name} $active={i === 0} aria-label={name}>
              <Icon name={name} />
            </PanelTab>
          ))}
          <More>»</More>
        </PanelTabs>
        <FilterBox>
          <Icon name="filter" size={13} />
          <input aria-label="Filter tree" />
        </FilterBox>
        <TreeArea>
          <Tree>
            {tree.map((label) => {
              const name = treeIcon(label);
              const leaf = name !== "boss" && name !== "cut";
              return (
                <TreeRow key={label}>
                  <Expander $empty={leaf} aria-label={"Expand " + label} />
                  <Twig $long={leaf} />
                  <Icon name={name} />
                  <TreeLabel $selected={name !== "plane" && name !== "origin"}>{label}</TreeLabel>
                </TreeRow>
              );
            })}
          </Tree>
          <ScrollV>
            <ScrollArrow $turn={180} aria-label="Scroll up" />
            <ThumbV />
            <ScrollArrow aria-label="Scroll down" />
          </ScrollV>
        </TreeArea>
        <ScrollH>
          <ScrollArrow $turn={90} aria-label="Scroll left" />
          <ThumbH />
          <ScrollArrow $turn={-90} aria-label="Scroll right" />
        </ScrollH>
      </Panel>
      <Viewport>
        <Model />
        <Splitter aria-label="Collapse panel">
          <span />
          <span />
          <span />
        </Splitter>
        <TaskPane>
          {["home", "library", "folder", "palette", "ball", "props", "forum"].map((name) => (
            <TaskButton key={name} $active={name === "ball"} aria-label={name}>
              <Icon name={name} />
            </TaskButton>
          ))}
        </TaskPane>
      </Viewport>
    </Workspace>

    <StudyBar>
      <PageButtons>
        {["M4 3v7M10 3L6 6.500l4 3.500z", "M9 3L5 6.500 9 10z", "M5 3l4 3.500L5 10z", "M10 3v7M4 3l4 3.500L4 10z"].map((d) => (
          <PageButton key={d} aria-label="Scroll tabs">
            <svg width="13" height="11" viewBox="0 1 13 11">
              <path d={d} fill="#85888d" stroke="#85888d" />
            </svg>
          </PageButton>
        ))}
      </PageButtons>
      <StudyTab $w={57} $active>
        Model
      </StudyTab>
      <StudyTab $w={104}>Motion Study 1</StudyTab>
    </StudyBar>
    <StatusBar>
      <StatusItem $first>SOLIDWORKS Professional 2015 x64 Edition</StatusItem>
      <StatusItem $w={114}>Editing Part</StatusItem>
      <StatusItem $w={50}>MMGS</StatusItem>
      <StatusItem $w={98}>
        <UpMark />
      </StatusItem>
      <Icon name="tag" />
    </StatusBar>
    <Watermark>
      <span>莫西网</span>www.3dmox.com
    </Watermark>
  </Window>
);

export default App;
